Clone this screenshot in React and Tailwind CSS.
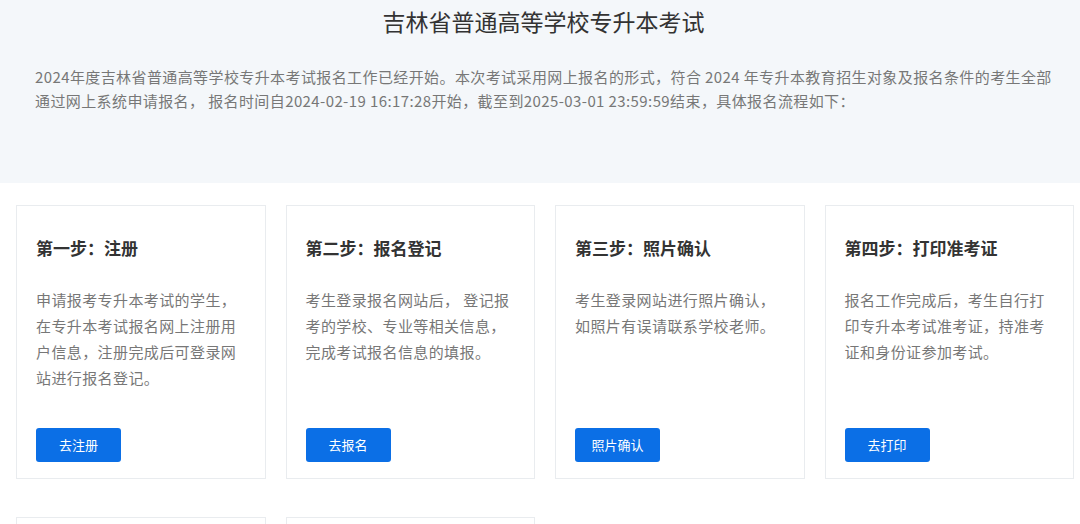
import React from "react";

const font = { fontFamily: '"Noto Sans CJK SC", "Noto Sans", sans-serif' };

const steps = [
  {
    title: "第一步：注册",
    lines: ["申请报考专升本考试的学生，", "在专升本考试报名网上注册用", "户信息，注册完成后可登录网", "站进行报名登记。"],
    btn: "去注册",
  },
  {
    title: "第二步：报名登记",
    lines: ["考生登录报名网站后， 登记报", "考的学校、专业等相关信息，", "完成考试报名信息的填报。"],
    btn: "去报名",
  },
  {
    title: "第三步：照片确认",
    lines: ["考生登录网站进行照片确认，", "如照片有误请联系学校老师。"],
    btn: "照片确认",
  },
  {
    title: "第四步：打印准考证",
    lines: ["报名工作完成后，考生自行打", "印专升本考试准考证，持准考", "证和身份证参加考试。"],
    btn: "去打印",
  },
];

function Card({ step }) {
  return (
    <div className="flex h-[274px] flex-col border border-[#e9ecef] bg-white px-[19px] pt-[30px] pb-[16px]">
      <div className="text-[17px] leading-[24px] font-bold text-[#333]">{step.title}</div>
      <div className="mt-[27px] text-[15px] leading-[26px] tracking-[0.4px] text-[#777]">
        {step.lines.map((l, i) => (
          <div key={i} className="whitespace-nowrap">{l}</div>
        ))}
      </div>
      <div className="mt-auto">
        <button className="h-[34px] w-[85px] rounded-[3px] bg-[#0b6fe6] text-[13px] text-white">
          {step.btn}
        </button>
      </div>
    </div>
  );
}

export default function App() {
  return (
    <div className="h-[524px] w-[1080px] overflow-hidden bg-white" style={font}>
      <div className="h-[183px] bg-[#f4f7fa] pt-[5px]">
        <h1 className="pl-[7px] text-center text-[23px] leading-[32px] font-normal text-[#333]">
          吉林省普通高等学校专升本考试
        </h1>
        <p className="mt-[28px] px-[35px] text-[15px] leading-[24px] tracking-[0.4px] text-[#777]">
          <span className="block whitespace-nowrap">2024年度吉林省普通高等学校专升本考试报名工作已经开始。本次考试采用网上报名的形式，符合 2024 年专升本教育招生对象及报名条件的考生全部</span>
          <span className="block whitespace-nowrap">通过网上系统申请报名， 报名时间自2024-02-19 16:17:28开始，截至到2025-03-01 23:59:59结束，具体报名流程如下：</span>
        </p>
      </div>
      <div className="grid grid-cols-[repeat(4,249.5px)] gap-x-[20px] gap-y-[38px] pt-[22px] pl-[16px]">
        {steps.map((s, i) => (
          <Card key={i} step={s} />
        ))}
        <div className="h-[274px] border border-[#e9ecef] bg-white" />
        <div className="h-[274px] border border-[#e9ecef] bg-white" />
      </div>
    </div>
  );
}
